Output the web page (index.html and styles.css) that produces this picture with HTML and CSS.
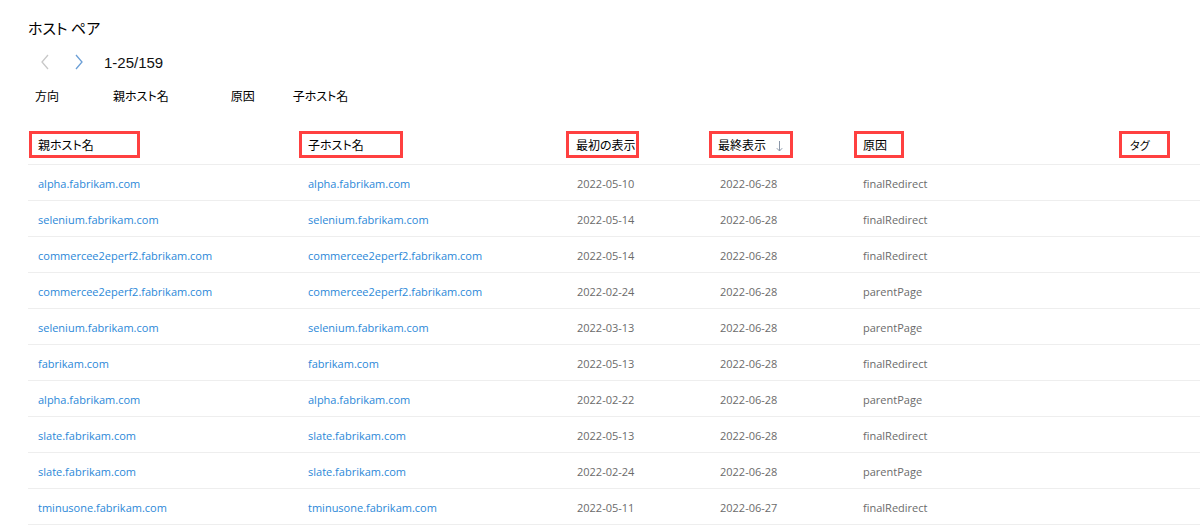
FILE: index.html
```html
<!DOCTYPE html>
<html lang="ja">
<head>
<meta charset="utf-8">
<link rel="stylesheet" href="styles.css">
</head>
<body>
<div class="page">
  <h1 class="title">ホスト ペア</h1>
  <div class="pager">
    <button class="nav nav-prev" aria-label="前へ"><svg width="10" height="16" viewBox="0 0 10 16"><polyline points="8,1 2,8 8,15" fill="none" stroke="#c8c8c8" stroke-width="1.3"/></svg></button>
    <button class="nav nav-next" aria-label="次へ"><svg width="10" height="16" viewBox="0 0 10 16"><polyline points="2,1 8,8 2,15" fill="none" stroke="#6b9fd6" stroke-width="1.3"/></svg></button>
    <span class="count">1-25/159</span>
  </div>
  <div class="filters">
    <span class="filter f1">方向</span>
    <span class="filter f2">親ホスト名</span>
    <span class="filter f3">原因</span>
    <span class="filter f4">子ホスト名</span>
  </div>
  <div class="table">
    <div class="row head">
      <div class="cell"><span class="hbox w1">親ホスト名</span></div>
      <div class="cell"><span class="hbox w2">子ホスト名</span></div>
      <div class="cell"><span class="hbox w3">最初の表示</span></div>
      <div class="cell"><span class="hbox w4">最終表示<svg class="sort" width="7" height="12" viewBox="0 0 7 12"><path d="M3.5 1V11M0.8 8.2L3.5 11L6.2 8.2" fill="none" stroke="#8a96a8" stroke-width="1"/></svg></span></div>
      <div class="cell"><span class="hbox w5">原因</span></div>
      <div class="cell"><span class="hbox w6">タグ</span></div>
    </div>
    <div class="row"><a class="cell link">alpha.fabrikam.com</a><a class="cell link">alpha.fabrikam.com</a><div class="cell muted">2022-05-10</div><div class="cell muted">2022-06-28</div><div class="cell muted">finalRedirect</div><div class="cell"></div></div>
    <div class="row"><a class="cell link">selenium.fabrikam.com</a><a class="cell link">selenium.fabrikam.com</a><div class="cell muted">2022-05-14</div><div class="cell muted">2022-06-28</div><div class="cell muted">finalRedirect</div><div class="cell"></div></div>
    <div class="row"><a class="cell link">commercee2eperf2.fabrikam.com</a><a class="cell link">commercee2eperf2.fabrikam.com</a><div class="cell muted">2022-05-14</div><div class="cell muted">2022-06-28</div><div class="cell muted">finalRedirect</div><div class="cell"></div></div>
    <div class="row"><a class="cell link">commercee2eperf2.fabrikam.com</a><a class="cell link">commercee2eperf2.fabrikam.com</a><div class="cell muted">2022-02-24</div><div class="cell muted">2022-06-28</div><div class="cell muted">parentPage</div><div class="cell"></div></div>
    <div class="row"><a class="cell link">selenium.fabrikam.com</a><a class="cell link">selenium.fabrikam.com</a><div class="cell muted">2022-03-13</div><div class="cell muted">2022-06-28</div><div class="cell muted">parentPage</div><div class="cell"></div></div>
    <div class="row"><a class="cell link">fabrikam.com</a><a class="cell link">fabrikam.com</a><div class="cell muted">2022-05-13</div><div class="cell muted">2022-06-28</div><div class="cell muted">finalRedirect</div><div class="cell"></div></div>
    <div class="row"><a class="cell link">alpha.fabrikam.com</a><a class="cell link">alpha.fabrikam.com</a><div class="cell muted">2022-02-22</div><div class="cell muted">2022-06-28</div><div class="cell muted">parentPage</div><div class="cell"></div></div>
    <div class="row"><a class="cell link">slate.fabrikam.com</a><a class="cell link">slate.fabrikam.com</a><div class="cell muted">2022-05-13</div><div class="cell muted">2022-06-28</div><div class="cell muted">finalRedirect</div><div class="cell"></div></div>
    <div class="row"><a class="cell link">slate.fabrikam.com</a><a class="cell link">slate.fabrikam.com</a><div class="cell muted">2022-02-24</div><div class="cell muted">2022-06-28</div><div class="cell muted">parentPage</div><div class="cell"></div></div>
    <div class="row"><a class="cell link">tminusone.fabrikam.com</a><a class="cell link">tminusone.fabrikam.com</a><div class="cell muted">2022-05-11</div><div class="cell muted">2022-06-27</div><div class="cell muted">finalRedirect</div><div class="cell"></div></div>
  </div>
</div>
</body>
</html>
```
FILE: styles.css
```css
html, body {
  margin: 0;
  padding: 0;
  background: #fff;
}
body {
  font-family: "Open Sans", "Noto Sans CJK JP", sans-serif;
  color: #000;
  overflow: hidden;
  height: 529px;
}
.page {
  padding-left: 28px;
}
.title {
  margin: 0;
  padding-top: 17px;
  height: 24px;
  font-family: "Noto Sans CJK JP", sans-serif;
  font-feature-settings: "palt";
  font-weight: 400;
  font-size: 15px;
  line-height: 22px;
}
.pager {
  display: flex;
  align-items: center;
  height: 26px;
  margin-top: 8px;
}
.nav {
  border: 0;
  background: none;
  padding: 0;
  margin: 0;
  width: 10px;
  height: 16px;
  display: flex;
}
.nav-prev { margin-left: 12px; }
.nav-next { margin-left: 24px; }
.count {
  margin-left: 20px;
  font-family: "Liberation Sans", sans-serif;
  font-size: 15px;
  color: #111;
}
.filters {
  display: flex;
  align-items: center;
  height: 20px;
  margin-top: 10px;
  font-family: "Noto Sans CJK JP", sans-serif;
  font-feature-settings: "palt";
  font-size: 12px;
}
.f1 { margin-left: 7px; }
.f2 { margin-left: 54px; }
.f3 { margin-left: 62px; }
.f4 { margin-left: 38px; }
.table {
  margin-top: 26px;
}
.row {
  display: grid;
  grid-template-columns: 270px 269px 143px 143px 267px 1fr;
  box-sizing: border-box;
  height: 36px;
  border-bottom: 1px solid #eeeeee;
  align-items: center;
  font-size: 11px;
  padding-top: 1px;
}
.row.head {
  height: 34px;
  align-items: start;
  padding-top: 0;
}
.cell {
  padding-left: 10px;
  white-space: nowrap;
}
.head .cell {
  padding-left: 1px;
}
.hbox {
  display: inline-flex;
  align-items: center;
  box-sizing: border-box;
  height: 27px;
  border: 3px solid #ff4040;
  padding-left: 6px;
  font-family: "Noto Sans CJK JP", sans-serif;
  font-feature-settings: "palt";
  font-size: 12px;
  color: #000;
  overflow: hidden;
}
.w1 { width: 111px; }
.w2 { width: 104px; }
.w3 { width: 73px; margin-left: -2px; padding-left: 7px; }
.w4 { width: 84px; margin-left: -2px; }
.w5 { width: 50px; }
.w6 { width: 51px; margin-left: -2px; padding-left: 8px; font-size: 11px; }
.sort {
  margin-left: 10px;
  margin-top: 3px;
}
.link {
  color: #2b88d8;
  text-decoration: none;
}
.muted {
  color: #6b6b6b;
}
```
